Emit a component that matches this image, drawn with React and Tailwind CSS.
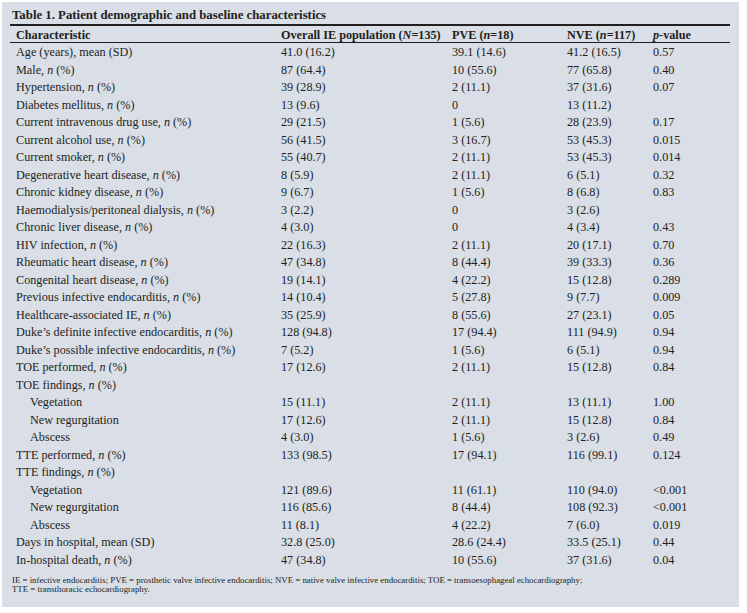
const rows = [
  { label: ['Age (years), mean (SD)'], all: '41.0 (16.2)', pve: '39.1 (14.6)', nve: '41.2 (16.5)', p: '0.57' },
  { label: ['Male, ', 'n', ' (%)'], all: '87 (64.4)', pve: '10 (55.6)', nve: '77 (65.8)', p: '0.40' },
  { label: ['Hypertension, ', 'n', ' (%)'], all: '39 (28.9)', pve: '2 (11.1)', nve: '37 (31.6)', p: '0.07' },
  { label: ['Diabetes mellitus, ', 'n', ' (%)'], all: '13 (9.6)', pve: '0', nve: '13 (11.2)', p: '' },
  { label: ['Current intravenous drug use, ', 'n', ' (%)'], all: '29 (21.5)', pve: '1 (5.6)', nve: '28 (23.9)', p: '0.17' },
  { label: ['Current alcohol use, ', 'n', ' (%)'], all: '56 (41.5)', pve: '3 (16.7)', nve: '53 (45.3)', p: '0.015' },
  { label: ['Current smoker, ', 'n', ' (%)'], all: '55 (40.7)', pve: '2 (11.1)', nve: '53 (45.3)', p: '0.014' },
  { label: ['Degenerative heart disease, ', 'n', ' (%)'], all: '8 (5.9)', pve: '2 (11.1)', nve: '6 (5.1)', p: '0.32' },
  { label: ['Chronic kidney disease, ', 'n', ' (%)'], all: '9 (6.7)', pve: '1 (5.6)', nve: '8 (6.8)', p: '0.83' },
  { label: ['Haemodialysis/peritoneal dialysis, ', 'n', ' (%)'], all: '3 (2.2)', pve: '0', nve: '3 (2.6)', p: '' },
  { label: ['Chronic liver disease, ', 'n', ' (%)'], all: '4 (3.0)', pve: '0', nve: '4 (3.4)', p: '0.43' },
  { label: ['HIV infection, ', 'n', ' (%)'], all: '22 (16.3)', pve: '2 (11.1)', nve: '20 (17.1)', p: '0.70' },
  { label: ['Rheumatic heart disease, ', 'n', ' (%)'], all: '47 (34.8)', pve: '8 (44.4)', nve: '39 (33.3)', p: '0.36' },
  { label: ['Congenital heart disease, ', 'n', ' (%)'], all: '19 (14.1)', pve: '4 (22.2)', nve: '15 (12.8)', p: '0.289' },
  { label: ['Previous infective endocarditis, ', 'n', ' (%)'], all: '14 (10.4)', pve: '5 (27.8)', nve: '9 (7.7)', p: '0.009' },
  { label: ['Healthcare-associated IE, ', 'n', ' (%)'], all: '35 (25.9)', pve: '8 (55.6)', nve: '27 (23.1)', p: '0.05' },
  { label: ['Duke\u2019s definite infective endocarditis, ', 'n', ' (%)'], all: '128 (94.8)', pve: '17 (94.4)', nve: '111 (94.9)', p: '0.94' },
  { label: ['Duke\u2019s possible infective endocarditis, ', 'n', ' (%)'], all: '7 (5.2)', pve: '1 (5.6)', nve: '6 (5.1)', p: '0.94' },
  { label: ['TOE performed, ', 'n', ' (%)'], all: '17 (12.6)', pve: '2 (11.1)', nve: '15 (12.8)', p: '0.84' },
  { label: ['TOE findings, ', 'n', ' (%)'], all: '', pve: '', nve: '', p: '' },
  { label: ['Vegetation'], sub: true, all: '15 (11.1)', pve: '2 (11.1)', nve: '13 (11.1)', p: '1.00' },
  { label: ['New regurgitation'], sub: true, all: '17 (12.6)', pve: '2 (11.1)', nve: '15 (12.8)', p: '0.84' },
  { label: ['Abscess'], sub: true, all: '4 (3.0)', pve: '1 (5.6)', nve: '3 (2.6)', p: '0.49' },
  { label: ['TTE performed, ', 'n', ' (%)'], all: '133 (98.5)', pve: '17 (94.1)', nve: '116 (99.1)', p: '0.124' },
  { label: ['TTE findings, ', 'n', ' (%)'], all: '', pve: '', nve: '', p: '' },
  { label: ['Vegetation'], sub: true, all: '121 (89.6)', pve: '11 (61.1)', nve: '110 (94.0)', p: '<0.001' },
  { label: ['New regurgitation'], sub: true, all: '116 (85.6)', pve: '8 (44.4)', nve: '108 (92.3)', p: '<0.001' },
  { label: ['Abscess'], sub: true, all: '11 (8.1)', pve: '4 (22.2)', nve: '7 (6.0)', p: '0.019' },
  { label: ['Days in hospital, mean (SD)'], all: '32.8 (25.0)', pve: '28.6 (24.4)', nve: '33.5 (25.1)', p: '0.44' },
  { label: ['In-hospital death, ', 'n', ' (%)'], all: '47 (34.8)', pve: '10 (55.6)', nve: '37 (31.6)', p: '0.04' },
];

const gridCols = 'grid grid-cols-[265px_171px_115px_86px_1fr] pl-[6px]';

const Label = ({ parts }) => (
  <>
    {parts.map((s, i) => (i % 2 === 1 ? <i key={i}>{s}</i> : <span key={i}>{s}</span>))}
  </>
);

export default function App() {
  return (
    <div className="bg-white w-[747px] h-[613px] p-[2px]">
      <div
        className="w-[737px] h-[605px] bg-[#d9dee7] pl-[8px] pr-[9px] pt-[4px] text-[#231f20]"
        style={{ fontFamily: '"Liberation Serif", "Times New Roman", serif' }}
      >
        {/* Title */}
        <div className="h-[18px] leading-[18px] pl-[2px] text-[12.8px] font-bold border-b-2 border-[#231f20] box-content">
          Table 1. Patient demographic and baseline characteristics
        </div>

        {/* Header */}
        <div className={`${gridCols} h-[16px] items-center text-[12.2px] font-bold border-b border-[#231f20] box-content`}>
          <div>Characteristic</div>
          <div>Overall IE population (<i>N</i>=135)</div>
          <div>PVE (<i>n</i>=18)</div>
          <div>NVE (<i>n</i>=117)</div>
          <div><i>p</i>-value</div>
        </div>

        {/* Body */}
        <div className="text-[12.2px]">
          {rows.map((r, idx) => (
            <div key={idx} className={`${gridCols} h-[17.5px] items-center`}>
              <div className={r.sub ? 'pl-[14px]' : ''}>
                <Label parts={r.label} />
              </div>
              <div>{r.all}</div>
              <div>{r.pve}</div>
              <div>{r.nve}</div>
              <div>{r.p}</div>
            </div>
          ))}
        </div>

        {/* Footnote */}
        <div className="mt-[8px] pl-[2px] text-[8.8px] leading-[9px]">
          <div>
            IE = infective endocarditis; PVE = prosthetic valve infective endocarditis; NVE = native valve infective endocarditis; TOE = transoesophageal echocardiography;
          </div>
          <div>TTE = transthoracic echocardiography.</div>
        </div>
      </div>
    </div>
  );
}
